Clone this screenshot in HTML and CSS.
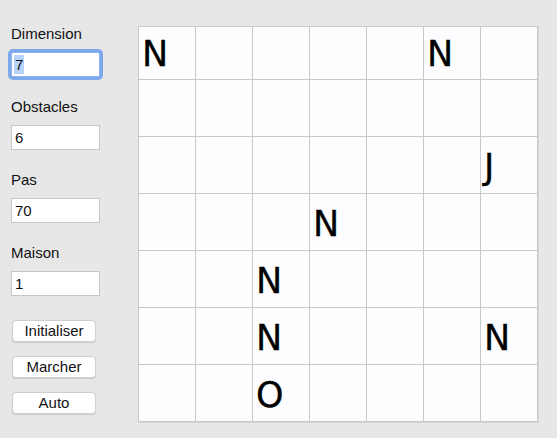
FILE: index.html
```html
<!DOCTYPE html>
<html lang="fr">
<head>
<meta charset="utf-8">
<title>Grille</title>
<link rel="stylesheet" href="styles.css">
</head>
<body>
<div class="app">
  <div class="panel">
    <div class="field">
      <div class="label">Dimension</div>
      <div class="input focused"><span class="sel">7</span></div>
    </div>
    <div class="field">
      <div class="label">Obstacles</div>
      <div class="input">6</div>
    </div>
    <div class="field">
      <div class="label">Pas</div>
      <div class="input">70</div>
    </div>
    <div class="field">
      <div class="label">Maison</div>
      <div class="input">1</div>
    </div>
    <div class="buttons">
      <button class="btn">Initialiser</button>
      <button class="btn">Marcher</button>
      <button class="btn">Auto</button>
    </div>
  </div>
  <div class="board">
    <div class="cell top">N</div><div class="cell top"></div><div class="cell top"></div><div class="cell top"></div><div class="cell top"></div><div class="cell top">N</div><div class="cell top"></div>
    <div class="cell"></div><div class="cell"></div><div class="cell"></div><div class="cell"></div><div class="cell"></div><div class="cell"></div><div class="cell"></div>
    <div class="cell"></div><div class="cell"></div><div class="cell"></div><div class="cell"></div><div class="cell"></div><div class="cell"></div><div class="cell">J</div>
    <div class="cell"></div><div class="cell"></div><div class="cell"></div><div class="cell">N</div><div class="cell"></div><div class="cell"></div><div class="cell"></div>
    <div class="cell"></div><div class="cell"></div><div class="cell">N</div><div class="cell"></div><div class="cell"></div><div class="cell"></div><div class="cell"></div>
    <div class="cell"></div><div class="cell"></div><div class="cell">N</div><div class="cell"></div><div class="cell"></div><div class="cell"></div><div class="cell">N</div>
    <div class="cell"></div><div class="cell"></div><div class="cell">O</div><div class="cell"></div><div class="cell"></div><div class="cell"></div><div class="cell"></div>
  </div>
</div>
</body>
</html>
```

FILE: styles.css
```css
html, body {
  margin: 0;
  padding: 0;
  background: #e8e7e8;
  width: 557px;
  height: 438px;
  overflow: hidden;
}
body {
  font-family: "Liberation Sans", Arial, sans-serif;
  color: #111;
}
.app {
  display: flex;
  align-items: flex-start;
}
.panel {
  width: 127px;
  padding: 25px 0 0 11px;
  display: flex;
  flex-direction: column;
}
.field {
  display: flex;
  flex-direction: column;
  margin-bottom: 21px;
}
.label {
  font-size: 15px;
  line-height: 18px;
  height: 18px;
  margin-bottom: 9px;
  color: #111;
}
.input {
  box-sizing: border-box;
  width: 89px;
  height: 25px;
  background: #fff;
  border: 1px solid #c6c6c6;
  font-size: 15px;
  line-height: 23px;
  padding-left: 3px;
  color: #111;
}
.input.focused {
  border-color: #8fb3ec;
  box-shadow: 0 0 0 3px #7ea8ec;
  border-radius: 2px;
  padding-left: 2px;
  padding-top: 2px;
}
.sel {
  display: inline-block;
  background: #b5d3fb;
  height: 19px;
  line-height: 19px;
  padding: 0 1px;
  vertical-align: top;
}
.buttons {
  display: flex;
  flex-direction: column;
  gap: 14px;
  margin-top: 3px;
}
.btn {
  box-sizing: border-box;
  width: 84px;
  height: 22px;
  margin: 0 0 0 1px;
  padding: 0;
  background: #fff;
  border: 1px solid #cfcfcf;
  border-radius: 4px;
  box-shadow: 0 1px 1px rgba(0,0,0,0.12);
  font-family: "Liberation Sans", Arial, sans-serif;
  font-size: 15px;
  line-height: 20px;
  color: #111;
}
.board {
  margin-top: 26px;
  display: grid;
  grid-template-columns: repeat(7, 56px);
  grid-template-rows: 52px repeat(6, 56px);
  gap: 1px;
  padding: 1px;
  background: #c9c9c9;
  box-shadow: 1px 1px 0 #d5d5d5;
}
.cell {
  background: #fdfcfe;
  font-family: "DejaVu Sans", sans-serif;
  font-size: 35px;
  line-height: 36px;
  padding: 12px 0 0 3px;
  color: #000;
  -webkit-text-stroke: 0.3px #000;
  overflow: hidden;
}
.cell.top {
  padding-top: 9px;
}
```
